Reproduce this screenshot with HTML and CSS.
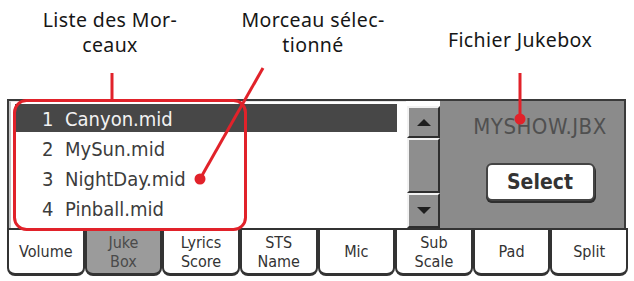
FILE: index.html
```html
<!DOCTYPE html>
<html lang="fr">
<head>
<meta charset="utf-8">
<title>Jukebox</title>
<link rel="stylesheet" href="styles.css">
</head>
<body>
<div class="page">
  <header class="labels">
    <div class="lbl lbl-list">Liste des Mor-<br>ceaux</div>
    <div class="lbl lbl-sel">Morceau sélec-<br>tionné</div>
    <div class="lbl lbl-file">Fichier Jukebox</div>
  </header>
  <div class="device">
    <div class="screen">
      <div class="rows">
        <div class="row sel"><span class="num">1</span>Canyon.mid</div>
        <div class="row"><span class="num">2</span>MySun.mid</div>
        <div class="row"><span class="num">3</span>NightDay.mid</div>
        <div class="row"><span class="num">4</span>Pinball.mid</div>
      </div>
      <div class="scroll">
        <div class="sbtn up"><span class="tri-up"></span></div>
        <div class="sbtn thumb"></div>
        <div class="sbtn down"><span class="tri-down"></span></div>
      </div>
      <div class="panel">
        <div class="fname">MYSHOW.JBX</div>
        <div class="select">Select</div>
      </div>
    </div>
    <div class="tabs">
      <div class="tab">Volume</div>
      <div class="tab active">Juke<br>Box</div>
      <div class="tab">Lyrics<br>Score</div>
      <div class="tab">STS<br>Name</div>
      <div class="tab">Mic</div>
      <div class="tab">Sub<br>Scale</div>
      <div class="tab">Pad</div>
      <div class="tab">Split</div>
    </div>
  </div>
  <svg class="callouts" width="634" height="281" viewBox="0 0 634 281">
    <g fill="none" stroke="#e1222a" stroke-width="3">
      <line x1="112" y1="73" x2="112" y2="100"/>
      <rect x="14.5" y="100.5" width="231" height="129" rx="12" ry="12"/>
      <line x1="263" y1="68" x2="200" y2="179"/>
      <line x1="520" y1="73" x2="520" y2="119"/>
    </g>
    <circle cx="200" cy="179" r="5.5" fill="#e1222a"/>
    <circle cx="520" cy="119" r="5.5" fill="#e1222a"/>
  </svg>
</div>
</body>
</html>
```
FILE: styles.css
```css
* { box-sizing: border-box; }
html, body { margin: 0; padding: 0; background: #fff; }
.page { position: relative; width: 634px; height: 281px; overflow: hidden; }

.labels {
  display: flex;
  height: 99px;
  font-family: "Noto Sans", "Open Sans", sans-serif;
  font-size: 19.5px;
  letter-spacing: 0.4px;
  line-height: 25px;
  color: #161616;
}
.lbl { text-align: center; padding-top: 7px; }
.lbl-list { width: 220px; }
.lbl-sel { width: 186px; }
.lbl-file { width: 228px; padding-top: 27px; }

.device { margin-left: 7px; width: 621px; }

.screen {
  display: flex;
  width: 619px;
  height: 129px;
  border: 2px solid #3a3a3a;
  border-bottom: none;
  font-family: "DejaVu Sans Condensed", "DejaVu Sans", sans-serif;
  font-stretch: condensed;
}

.rows {
  width: 397px;
  background: #fff;
  border-left: 2px solid #c4c4c4;
  border-top: 1px solid #e6e6e6;
  padding: 2px 9px 0 4px;
}
.row {
  height: 28px;
  margin-bottom: 2px;
  padding-top: 3px;
  line-height: 25px;
  font-size: 20px;
  color: #3c3c3c;
  padding-left: 27px;
  white-space: nowrap;
}
.row.sel { background: #474747; color: #f2f2f2; }
.num { display: inline-block; width: 23px; }

.scroll {
  width: 34px;
  background: #fff;
  padding: 5px 0 0 1px;
  display: flex;
  flex-direction: column;
}
.sbtn {
  background: #8e8e8e;
  border-top: 2px solid #f2f2f2;
  border-left: 2px solid #f2f2f2;
  border-right: 2px solid #2e2e2e;
  border-bottom: 2px solid #2e2e2e;
  display: flex;
  align-items: center;
  justify-content: center;
}
.up { height: 32px; }
.thumb { height: 55px; }
.down { height: 35px; }
.tri-up {
  width: 0; height: 0;
  border-left: 7px solid transparent;
  border-right: 7px solid transparent;
  border-bottom: 7px solid #1e1e1e;
}
.tri-down {
  width: 0; height: 0;
  border-left: 7px solid transparent;
  border-right: 7px solid transparent;
  border-top: 7px solid #1e1e1e;
}

.panel {
  flex: 1;
  background: #8b8b8b;
  display: flex;
  flex-direction: column;
  align-items: center;
  padding-left: 16px;
}
.fname {
  margin-top: 13px;
  font-size: 22px;
  line-height: 26px;
  color: #505050;
  letter-spacing: 0.5px;
}
.select {
  margin-top: 23px;
  width: 109px;
  height: 38px;
  background: #fff;
  border: 2px solid #444;
  border-radius: 6px;
  box-shadow: 0 2px 0 #2e2e2e, 1px 2px 0 #2e2e2e;
  font-size: 21px;
  font-weight: bold;
  line-height: 34px;
  text-align: center;
  color: #333;
}

.tabs {
  display: flex;
  border-top: 2px solid #333;
  font-family: "DejaVu Sans Condensed", "DejaVu Sans", sans-serif;
  font-stretch: condensed;
}
.tab {
  flex: 1;
  height: 46px;
  background: #fff;
  border: 2px solid #333;
  border-top: none;
  border-bottom-width: 3px;
  border-radius: 0 0 8px 8px;
  display: flex;
  align-items: center;
  justify-content: center;
  text-align: center;
  font-size: 16px;
  line-height: 19px;
  color: #333;
}
.tab.active { background: #9b9b9b; color: #4a4a4a; }

.callouts { position: absolute; left: 0; top: 0; pointer-events: none; }
```
